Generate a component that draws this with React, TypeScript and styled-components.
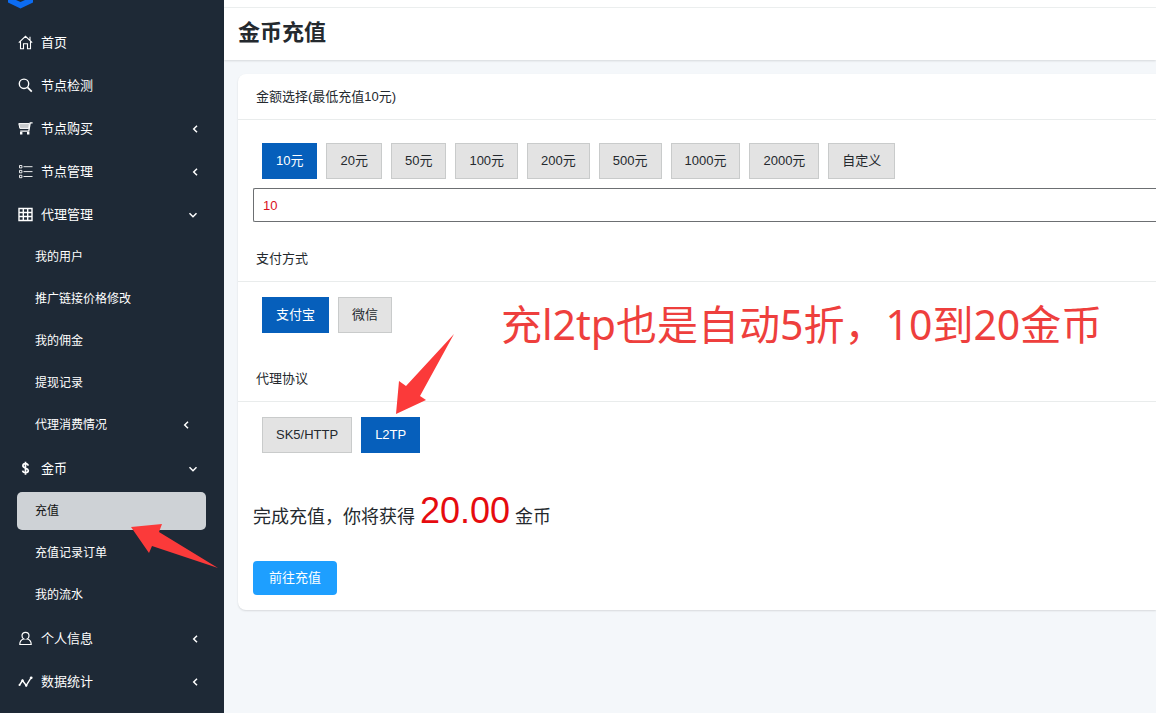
import React, { useState } from "react";
import styled, { createGlobalStyle } from "styled-components";

const Global = createGlobalStyle`
  * { box-sizing: border-box; }
  body { margin: 0; background: #f4f7fa; color: #24292e; font: 13px/20px "Liberation Sans", "Noto Sans CJK SC", sans-serif; }
  button, input { font: inherit; }
`;

const Layout = styled.div`
  position: relative;
  display: flex;
  min-height: 100vh;
  overflow: hidden;
`;
const Sidebar = styled.aside`
  flex: 0 0 224px;
  background: #1e2936;
  color: #fff;
`;
const Brand = styled.div`
  height: 21px;
  padding-left: 8px;
`;
const Nav = styled.nav`
  display: flex;
  flex-direction: column;
`;
const NavItem = styled.a`
  display: flex;
  align-items: center;
  height: 43px;
  padding: 0 25px 0 18px;
  gap: 8px;
  color: #fff;
  text-decoration: none;
  > span { flex: 1; }
`;
const SubMenu = styled.div`
  display: flex;
  flex-direction: column;
  gap: 4px;
  padding: 2px 18px 3px 17px;
`;
const SubItem = styled.a<{ $active?: boolean }>`
  display: flex;
  align-items: center;
  justify-content: space-between;
  height: 38px;
  padding: 0 16px 0 18px;
  border-radius: 5px;
  font-size: 12px;
  text-decoration: none;
  color: ${(p) => (p.$active ? "#111" : "#fff")};
  background: ${(p) => (p.$active ? "#ced2d6" : "transparent")};
`;
const Icon = styled.svg`
  flex: none;
  display: block;
  fill: none;
  stroke: currentColor;
`;
const Main = styled.main`
  flex: 1;
  min-width: 0;
`;
const TopBar = styled.div`
  height: 8px;
  background: #fff;
  border-bottom: 1px solid #edf0f0;
`;
const PageHeader = styled.header`
  padding: 10px 14px 12px;
  background: #fff;
  box-shadow: 0 1px 2px rgba(0, 0, 0, 0.12);
`;
const Title = styled.h1`
  margin: 0;
  font-size: 22px;
  line-height: 30px;
  font-weight: 700;
`;
const Card = styled.form`
  margin: 14px 0 0 14px;
  background: #fff;
  border-radius: 8px 0 0 8px;
  box-shadow: 0 1px 2px rgba(0, 0, 0, 0.12);
`;
const SectionTitle = styled.h2`
  margin: 0;
  padding: 13px 18px 12px;
  border-bottom: 1px solid #e9ecec;
  font-size: 13px;
  line-height: 20px;
  font-weight: 400;
`;
const SectionBody = styled.div<{ $top?: number }>`
  padding: ${(p) => p.$top ?? 15}px 0 14px 15px;
`;
const Options = styled.div`
  display: flex;
  flex-wrap: wrap;
  gap: 9px;
  padding: 0 9px 9px;
`;
const Option = styled.button<{ $on: boolean }>`
  height: 36px;
  padding: 0 13px;
  border: 1px solid ${(p) => (p.$on ? "#065fbb" : "#c9cbcb")};
  background: ${(p) => (p.$on ? "#065fbb" : "#e3e3e3")};
  color: ${(p) => (p.$on ? "#fff" : "#24292e")};
`;
const AmountInput = styled.input`
  display: block;
  width: 100%;
  height: 34px;
  padding: 0 9px;
  border: 1px solid #6c6f72;
  border-right: 0;
  border-radius: 2px 0 0 2px;
  color: #d9101c;
  outline: none;
`;
const Result = styled.p`
  margin: 0;
  padding: 14px 0 23px 15px;
  font-size: 18px;
  line-height: 42px;
  strong { font-size: 36px; font-weight: 400; color: #e60b0f; }
`;
const Actions = styled.div`
  padding: 0 15px 15px;
`;
const Submit = styled.button`
  display: block;
  height: 34px;
  padding: 0 16px;
  border: 0;
  border-radius: 4px;
  background: #1e9fff;
  color: #fff;
`;
const Note = styled.div`
  position: absolute;
  left: 501px;
  top: 294px;
  font: 41px/60px "Noto Sans", "Noto Sans CJK SC", sans-serif;
  color: #ee3f3d;
  white-space: nowrap;
`;
const Arrow = styled.svg<{ $x: number; $y: number }>`
  position: absolute;
  left: ${(p) => p.$x}px;
  top: ${(p) => p.$y}px;
  fill: #fb3a3a;
`;

const icons: Record<string, React.ReactNode> = {
  home: <path d="M.8 7.7 7.5 1.3l6.7 6.4M2.5 6.5v7.2h3V8.8h4v4.9h3V6.5M12 1.8v3.4" strokeWidth="1.1" />,
  search: <><circle cx="6" cy="5.8" r="4.7" strokeWidth="1.4" /><path d="m9.5 9.3 4.3 4.3" strokeWidth="1.7" /></>,
  cart: <><path d="M.8 2.6h10.6l-.6 4.8H1.9z" fill="currentColor" fillOpacity=".75" /><path d="M14.6 1.8h-2.4l-1.4 8.4H2.2" strokeWidth="1.3" /><path d="M2 11h2.4v2.4H2zM9 11h2.4v2.4H9z" fill="currentColor" stroke="none" /></>,
  list: <path d="M1.5 1.5h2.4v2.4H1.5zM1.5 6.4h2.4v2.4H1.5zM1.5 11.3h2.4v2.4H1.5zM5.5 2.7h9M5.5 7.6h9M5.5 12.5h9" strokeWidth=".9" />,
  table: <path d="M1 1.5h13v12H1zM1 5.5h13M1 9.5h13M5.3 1.5v12M9.7 1.5v12" strokeWidth="1.4" />,
  dollar: <path d="M10.2 4.6C9.9 3.2 8.9 2.6 7.5 2.6 5.9 2.6 4.9 3.4 4.9 4.7c0 3 5.4 1.9 5.4 4.9 0 1.5-1.2 2.2-2.8 2.2-1.5 0-2.6-.6-2.9-2.1M7.5.8v13" strokeWidth="1.7" />,
  user: <path d="M5.8 8C4.6 7.4 4 6.2 4 4.7 4 2.6 5.4 1.3 7.5 1.3S11 2.6 11 4.7c0 1.5-.6 2.7-1.8 3.3 2.6.6 4 2.6 4 5.5H1.8c0-2.9 1.4-4.9 4-5.5z" strokeWidth="1.2" />,
  chart: <><path d="m1.5 11 3-4.5 3.7 5L13 3.8" strokeWidth="1.4" /><circle cx="1.5" cy="11" r="1" fill="currentColor" stroke="none" /><circle cx="4.5" cy="6.5" r="1.2" fill="currentColor" stroke="none" /><circle cx="8.2" cy="11.5" r="1.2" fill="currentColor" stroke="none" /><circle cx="13.2" cy="3.8" r="1.4" fill="currentColor" stroke="none" /></>,
};

const Chevron = ({ open }: { open?: boolean }) => (
  <Icon width={open ? 12 : 8} height="8" viewBox={open ? "0 0 12 8" : "0 0 8 8"} strokeWidth="1.5">
    <path d={open ? "M2.5 2.2 6 5.7l3.5-3.5" : "M6 .7 2.7 4 6 7.3"} />
  </Icon>
);

type Entry = { icon: string; label: string; open?: boolean; leaf?: boolean; children?: string[] };
const menu: Entry[] = [
  { icon: "home", label: "首页", leaf: true },
  { icon: "search", label: "节点检测", leaf: true },
  { icon: "cart", label: "节点购买" },
  { icon: "list", label: "节点管理" },
  { icon: "table", label: "代理管理", open: true, children: ["我的用户", "推广链接价格修改", "我的佣金", "提现记录", "代理消费情况"] },
  { icon: "dollar", label: "金币", open: true, children: ["充值", "充值记录订单", "我的流水"] },
  { icon: "user", label: "个人信息" },
  { icon: "chart", label: "数据统计" },
];

const amounts = ["10元", "20元", "50元", "100元", "200元", "500元", "1000元", "2000元", "自定义"];

function Choice({ items, initial }: { items: string[]; initial: string }) {
  const [value, setValue] = useState(initial);
  return (
    <Options>
      {items.map((t) => (
        <Option key={t} type="button" $on={t === value} aria-pressed={t === value} onClick={() => setValue(t)}>{t}</Option>
      ))}
    </Options>
  );
}

export default function App() {
  return (
    <Layout>
      <Global />
      <Sidebar>
        <Brand>
          <Icon width="25" height="9" viewBox="0 0 25 9" aria-hidden="true">
            <path d="M0 0h8l4.5 2L17 0h8v2.5L12.5 8.5 0 2.5z" fill="#0c6cf2" stroke="none" />
          </Icon>
        </Brand>
        <Nav>
          {menu.map((m) => (
            <React.Fragment key={m.label}>
              <NavItem href="#">
                <Icon width="15" height="15" viewBox="0 0 15 15">{icons[m.icon]}</Icon>
                <span>{m.label}</span>
                {!m.leaf && <Chevron open={m.open} />}
              </NavItem>
              {m.children && (
                <SubMenu>
                  {m.children.map((c) => (
                    <SubItem href="#" key={c} $active={c === "充值"}>
                      {c}
                      {c === "代理消费情况" && <Chevron />}
                    </SubItem>
                  ))}
                </SubMenu>
              )}
            </React.Fragment>
          ))}
        </Nav>
      </Sidebar>
      <Main>
        <TopBar />
        <PageHeader><Title>金币充值</Title></PageHeader>
        <Card>
          <SectionTitle>金额选择(最低充值10元)</SectionTitle>
          <SectionBody $top={23}>
            <Choice items={amounts} initial="10元" />
            <AmountInput aria-label="金额" defaultValue="10" />
          </SectionBody>
          <SectionTitle>支付方式</SectionTitle>
          <SectionBody>
            <Choice items={["支付宝", "微信"]} initial="支付宝" />
          </SectionBody>
          <SectionTitle>代理协议</SectionTitle>
          <SectionBody>
            <Choice items={["SK5/HTTP", "L2TP"]} initial="L2TP" />
          </SectionBody>
          <Result>完成充值，你将获得 <strong>20.00</strong> 金币</Result>
          <Actions><Submit type="button">前往充值</Submit></Actions>
        </Card>
      </Main>
      <Note>充l2tp也是自动5折，10到20金币</Note>
      <Arrow $x={396} $y={334} width="60" height="81" viewBox="0 0 60 81" aria-hidden="true">
        <path d="M58 0 24 62l6 4L0 80 3 47l7 5z" />
      </Arrow>
      <Arrow $x={131} $y={524} width="88" height="45" viewBox="0 0 88 45" aria-hidden="true">
        <path d="m0 3 31-3-3 8 59 36-66-22-3 7z" />
      </Arrow>
    </Layout>
  );
}
